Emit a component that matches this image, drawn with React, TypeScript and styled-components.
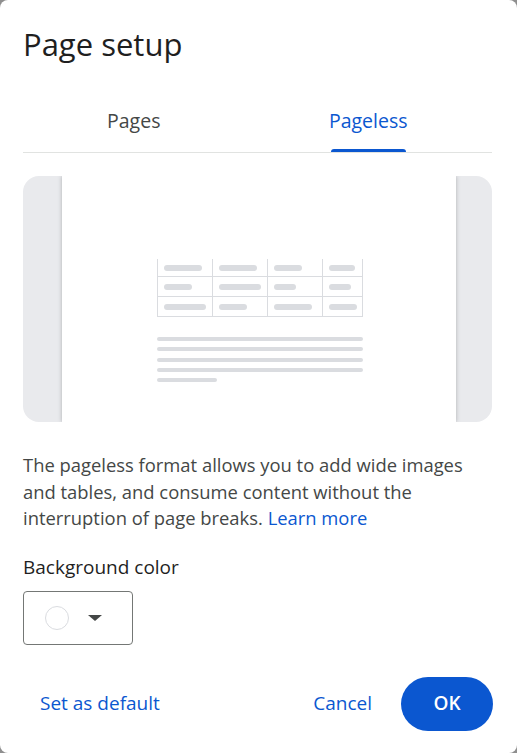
import React, { useState } from "react";
import styled, { createGlobalStyle } from "styled-components";

const GlobalStyle = createGlobalStyle`
  html, body {
    margin: 0;
    padding: 0;
    background: #8f8f8f;
  }
  body {
    font-family: "Open Sans", "Noto Sans", Roboto, sans-serif;
    -webkit-font-smoothing: antialiased;
  }
`;

const Dialog = styled.div`
  width: 517px;
  height: 753px;
  box-sizing: border-box;
  background: #ffffff;
  border-radius: 8px;
  padding: 24px 25px 0 23px;
  display: flex;
  flex-direction: column;
`;

const Title = styled.h1`
  margin: 0;
  font-size: 31px;
  font-weight: 400;
  line-height: 40px;
  color: #1f1f1f;
`;

const Tabs = styled.div`
  margin-top: 36px;
  display: flex;
  border-bottom: 1px solid #e1e3e1;
`;

const Tab = styled.button<{ $active?: boolean }>`
  flex: 1;
  height: 52px;
  border: none;
  background: none;
  font-family: inherit;
  font-size: 19.5px;
  font-weight: 500;
  color: ${(p) => (p.$active ? "#0b57d0" : "#444746")};
  display: flex;
  justify-content: center;
  align-items: flex-start;
  padding: 7px 13px 0 0;
  box-sizing: border-box;
  cursor: pointer;
`;

const TabLabel = styled.span<{ $active?: boolean }>`
  position: relative;
  height: 45px;
  display: inline-block;

  &::after {
    content: "";
    display: ${(p) => (p.$active ? "block" : "none")};
    position: absolute;
    left: 2px;
    right: 2px;
    bottom: 0;
    height: 3px;
    border-radius: 3px 3px 0 0;
    background: #0b57d0;
  }
`;

const Preview = styled.div`
  margin-top: 23px;
  height: 246px;
  border-radius: 16px;
  background: #e9eaed;
  display: flex;
  justify-content: center;
  overflow: hidden;
`;

const Sheet = styled.div`
  width: 394px;
  margin-left: 3px;
  background: #ffffff;
  box-shadow: 0 0 4px rgba(60, 64, 67, 0.35);
  display: flex;
  flex-direction: column;
  align-items: center;
  padding: 83px 0 0 2px;
  box-sizing: border-box;
`;

const Table = styled.div`
  width: 206px;
  display: grid;
  grid-template-columns: 55px 55px 55px 41px;
`;

const Cell = styled.div<{ $last?: boolean; $first?: boolean }>`
  height: ${(p) => (p.$first ? "18px" : "20px")};
  border-bottom: 1px solid #dadce0;
  border-right: ${(p) => (p.$last ? "1px solid #dadce0" : "none")};
  border-left: 1px solid #dadce0;
  display: flex;
  align-items: center;
  padding-left: 6px;
  box-sizing: border-box;
`;

const Bar = styled.div`
  height: 6px;
  border-radius: 3px;
  background: #dadce0;
`;

const Lines = styled.div`
  width: 206px;
  margin-top: 20px;
  display: flex;
  flex-direction: column;
  gap: 6.3px;
`;

const Line = styled.div`
  height: 4px;
  border-radius: 2px;
  background: #dadce0;
`;

const Description = styled.p`
  margin: 30px 0 0;
  font-size: 18.4px;
  line-height: 26.5px;
  color: #444746;
`;

const Link = styled.a`
  color: #0b57d0;
  text-decoration: none;
`;

const Label = styled.div`
  margin-top: 23px;
  font-size: 19px;
  font-weight: 500;
  color: #1f1f1f;
  line-height: 24px;
`;

const ColorButton = styled.button`
  margin-top: 12px;
  width: 110px;
  height: 54px;
  border: 1px solid #747775;
  border-radius: 4px;
  background: #ffffff;
  display: flex;
  align-items: center;
  padding: 0 0 0 21px;
  gap: 19px;
  box-sizing: border-box;
  cursor: pointer;
`;

const Swatch = styled.span`
  width: 24px;
  height: 24px;
  box-sizing: border-box;
  border-radius: 50%;
  border: 1px solid #dadce0;
  background: #ffffff;
`;

const Caret = styled.span`
  width: 0;
  height: 0;
  border-left: 7px solid transparent;
  border-right: 7px solid transparent;
  border-top: 6px solid #444746;
`;

const Footer = styled.div`
  margin: 32px -1px 0 0;
  display: flex;
  align-items: center;
`;

const TextButton = styled.button`
  border: none;
  background: none;
  font-family: inherit;
  font-size: 19px;
  font-weight: 500;
  color: #0b57d0;
  height: 54px;
  padding: 0 17px 2px;
  border-radius: 27px;
  cursor: pointer;
`;

const Spacer = styled.div`
  flex: 1;
`;

const PrimaryButton = styled.button`
  margin-left: 12px;
  width: 92px;
  height: 54px;
  border: none;
  border-radius: 27px;
  background: #0b57d0;
  color: #ffffff;
  font-family: inherit;
  font-size: 19px;
  font-weight: 600;
  padding-bottom: 2px;
  cursor: pointer;
`;

const rows = [
  [38, 38, 28, 26],
  [28, 42, 22, 22],
  [42, 28, 38, 28],
];

const lineWidths = ["100%", "100%", "100%", "100%", "60px"];

export default function App() {
  const [tab, setTab] = useState("pageless");

  return (
    <>
      <GlobalStyle />
      <Dialog>
        <Title>Page setup</Title>
        <Tabs>
          <Tab $active={tab === "pages"} onClick={() => setTab("pages")}>
            <TabLabel $active={tab === "pages"}>Pages</TabLabel>
          </Tab>
          <Tab $active={tab === "pageless"} onClick={() => setTab("pageless")}>
            <TabLabel $active={tab === "pageless"}>Pageless</TabLabel>
          </Tab>
        </Tabs>

        <Preview>
          <Sheet>
            <Table>
              {rows.map((row, r) =>
                row.map((w, c) => (
                  <Cell key={`${r}-${c}`} $last={c === 3} $first={r === 0}>
                    <Bar style={{ width: w }} />
                  </Cell>
                ))
              )}
            </Table>
            <Lines>
              {lineWidths.map((w, i) => (
                <Line key={i} style={{ width: w }} />
              ))}
            </Lines>
          </Sheet>
        </Preview>

        <Description>
          The pageless format allows you to add wide images and tables, and
          consume content without the interruption of page breaks.{" "}
          <Link href="#">Learn more</Link>
        </Description>

        <Label>Background color</Label>
        <ColorButton>
          <Swatch />
          <Caret />
        </ColorButton>

        <Footer>
          <TextButton>Set as default</TextButton>
          <Spacer />
          <TextButton>Cancel</TextButton>
          <PrimaryButton>OK</PrimaryButton>
        </Footer>
      </Dialog>
    </>
  );
}
